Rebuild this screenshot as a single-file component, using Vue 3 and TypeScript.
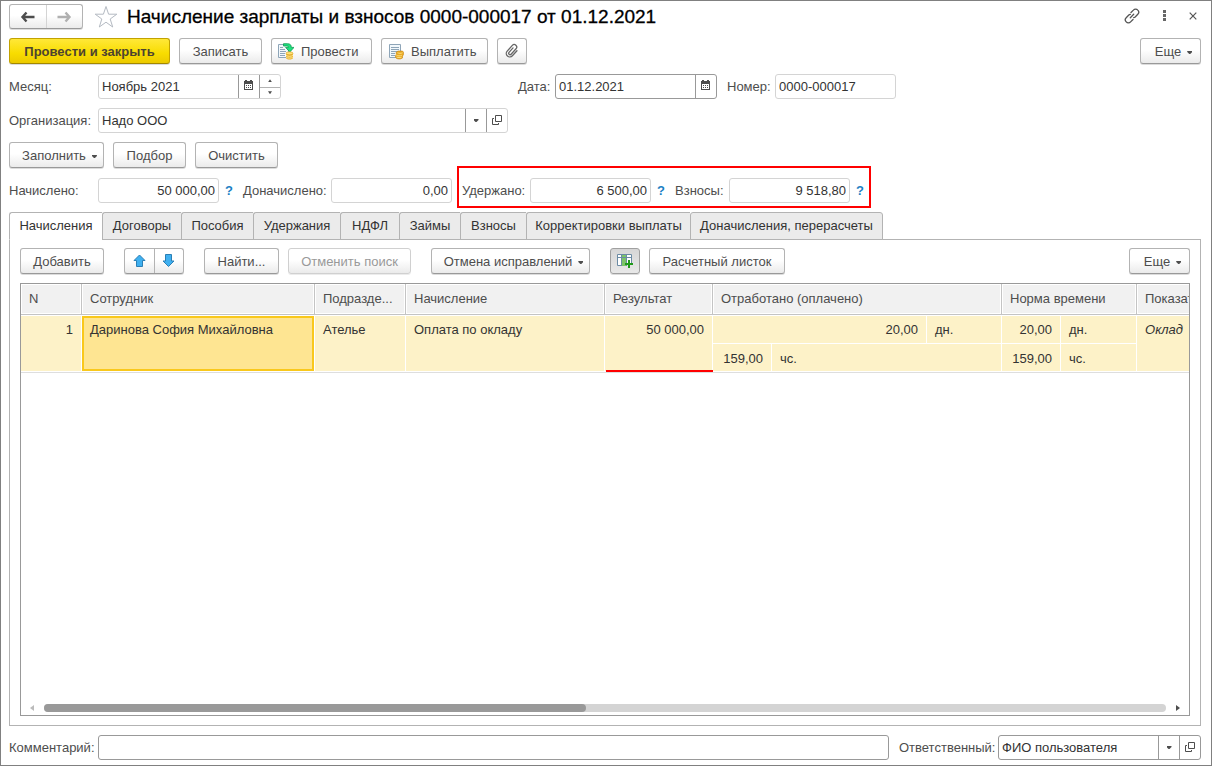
<script setup lang="ts">
import { ref } from 'vue'

const month = ref('Ноябрь 2021')
const date = ref('01.12.2021')
const docNumber = ref('0000-000017')
const organization = ref('Надо ООО')
const accrued = ref('50 000,00')
const extraAccrued = ref('0,00')
const withheld = ref('6 500,00')
const contributions = ref('9 518,80')
const comment = ref('')
const responsible = ref('ФИО пользователя')

const tabs: string[] = [
  'Начисления',
  'Договоры',
  'Пособия',
  'Удержания',
  'НДФЛ',
  'Займы',
  'Взносы',
  'Корректировки выплаты',
  'Доначисления, перерасчеты',
]
const activeTab = ref(0)
</script>

<template>
  <main class="window">
    <header class="titlebar">
      <div class="pair nav">
        <button type="button" aria-label="Назад">
          <svg width="16" height="12" viewBox="0 0 16 12"><path d="M6.500 1.500 2.500 6l4 4.500M2.500 6h12" fill="none" stroke="#4d4d4d" stroke-width="2.400" /></svg>
        </button>
        <button type="button" aria-label="Вперед">
          <svg width="16" height="12" viewBox="0 0 16 12"><path d="M9.500 1.500 13.500 6l-4 4.500M13.500 6h-12" fill="none" stroke="#b0b0b0" stroke-width="2.400" /></svg>
        </button>
      </div>
      <button type="button" class="bare star" aria-label="В избранное">
        <svg width="24" height="24" viewBox="0 0 24 24"><path d="M12 1.500 14.600 9.200H22.800L16.200 14 18.700 22 12 17.200 5.300 22 7.800 14 1.200 9.200H9.400Z" fill="#fff" stroke="#b4bac2" stroke-width="1" /></svg>
      </button>
      <h1>Начисление зарплаты и взносов 0000-000017 от 01.12.2021</h1>
      <div class="window-tools">
        <button type="button" class="bare" aria-label="Ссылка">
          <svg width="16" height="16" viewBox="0 0 16 16"><g fill="none" stroke="#555" stroke-width="1.300" stroke-linecap="round"><path d="M7 4.500 9.400 2.100a3 3 0 0 1 4.400 0 3 3 0 0 1 0 4.200L11.200 8.900a3 3 0 0 1-1.500.7" /><path d="M9 11.500 6.600 13.900a3 3 0 0 1-4.400 0 3 3 0 0 1 0-4.200L4.800 7.100a3 3 0 0 1 1.500-.7" /><path d="M6.300 9.700 9.700 6.300" /></g></svg>
        </button>
        <button type="button" class="bare" aria-label="Меню">
          <svg width="3" height="11" viewBox="0 0 3 11"><path d="M0 0h3v3H0zM0 4h3v3H0zM0 8h3v3H0z" fill="#666" /></svg>
        </button>
        <button type="button" class="bare" aria-label="Закрыть">
          <svg width="8" height="8" viewBox="0 0 8 8"><path d="M.7.7l6.600 6.600M7.300.7.7 7.300" stroke="#555" stroke-width="1.200" /></svg>
        </button>
      </div>
    </header>

    <div class="bar commands">
      <button type="button" class="btn primary">Провести и закрыть</button>
      <button type="button" class="btn">Записать</button>
      <button type="button" class="btn with-icon">
        <svg width="16" height="17" viewBox="0 0 16 17">
          <path d="M.5 1.500h10v13H.5z" fill="#f4f8fb" stroke="#8ea5b8" />
          <path d="M2 4.500h3M2 6.500h5M2 8.500h6M2 10.500h5M2 12.500h5" stroke="#8ea5b8" />
          <path d="M5.500.7h4c2.600 0 3.800 1.300 3.800 3.700H16L11.800 9 7.600 4.400h2.700c0-1-.4-1.400-1.500-1.400H5.500z" fill="#1fe07e" stroke="#0d9a50" stroke-width=".8" />
          <path d="M8 10.200v5c1.500 1.700 5.500 1.700 7 0v-5z" fill="#e8b02c" /><ellipse cx="11.500" cy="10.300" rx="3.500" ry="1.500" fill="#ffe27a" stroke="#d69a1c" stroke-width=".6" /><path d="M8 12.200c1.500 1.500 5.500 1.500 7 0M8 14c1.500 1.500 5.500 1.500 7 0" fill="none" stroke="#fff0a8" stroke-width=".8" />
        </svg>
        <span>Провести</span>
      </button>
      <button type="button" class="btn with-icon">
        <svg width="16" height="17" viewBox="0 0 16 17">
          <path d="M1.500 1.500h11v13h-11z" fill="#f2f8fc" stroke="#8ea5b8" />
          <path d="M3 4.500h8M3 6.500h8M3 8.500h7M3 10.500h4M3 12.500h4" stroke="#8ea5b8" />
          <path d="M8 9.500 10 8h4.500l1 1.200v2.500l-1 1.300v2c-2 1.500-5 1.200-6.500 0l-.7-2 1-1.500z" fill="#e9a820" stroke="#c88512" stroke-width=".6" />
          <path d="M9.500 9.800c1.500.7 3.500.7 5 0M8.300 12c1.500 1 3.800 1.200 5.500.3M8.500 14c1.500.8 3.500.9 5 .2" fill="none" stroke="#ffe68c" stroke-width=".9" />
        </svg>
        <span>Выплатить</span>
      </button>
      <button type="button" class="btn" aria-label="Файлы">
        <svg width="16" height="16" viewBox="0 0 16 16"><g transform="rotate(42 8 8)"><path d="M11.500 4.500v6.800a3.500 3.500 0 0 1-7 0V3.600a2.500 2.500 0 0 1 5 0v7.400a1.400 1.400 0 0 1-2.800 0V5" fill="none" stroke="#666" stroke-width="1.300" stroke-linecap="round" /></g></svg>
      </button>
      <button type="button" class="btn more">Еще<i class="caret"></i></button>
    </div>

    <div class="bar">
      <label class="lead" for="month">Месяц:</label>
      <div class="field month">
        <input id="month" v-model="month" type="text" />
        <button type="button" aria-label="Календарь">
          <svg width="10" height="13" viewBox="0 0 10 13"><path d="M0 1h1V0h2v1h3V0h2v1h1v9H0zM1 4v5h7V4z" fill="#4d4d4d" fill-rule="evenodd" /><path d="M2 5h1v1H2zM4 5h1v1H4zM6 5h1v1H6zM2 7h1v1H2zM4 7h1v1H4zM6 7h1v1H6z" fill="#4d4d4d" /></svg>
        </button>
        <div class="spinner">
          <button type="button" aria-label="Больше"><i class="tick up"></i></button>
          <button type="button" aria-label="Меньше"><i class="tick"></i></button>
        </div>
      </div>
      <label class="date-label" for="date">Дата:</label>
      <div class="field dark date">
        <input id="date" v-model="date" type="text" />
        <button type="button" aria-label="Календарь">
          <svg width="10" height="13" viewBox="0 0 10 13"><path d="M0 1h1V0h2v1h3V0h2v1h1v9H0zM1 4v5h7V4z" fill="#4d4d4d" fill-rule="evenodd" /><path d="M2 5h1v1H2zM4 5h1v1H4zM6 5h1v1H6zM2 7h1v1H2zM4 7h1v1H4zM6 7h1v1H6z" fill="#4d4d4d" /></svg>
        </button>
      </div>
      <label class="number-label" for="number">Номер:</label>
      <div class="field short"><input id="number" v-model="docNumber" type="text" /></div>
    </div>

    <div class="bar">
      <label class="lead" for="org">Организация:</label>
      <div class="field org">
        <input id="org" v-model="organization" type="text" />
        <button type="button" aria-label="Выбрать"><i class="caret"></i></button>
        <button type="button" aria-label="Открыть">
          <svg width="10" height="11" viewBox="0 0 10 11"><path d="M3.500.5h6v6h-6zM2 3.500H.5v6h6V8" fill="none" stroke="#4d4d4d" /></svg>
        </button>
      </div>
    </div>

    <div class="bar fill">
      <button type="button" class="btn">Заполнить<i class="caret"></i></button>
      <button type="button" class="btn">Подбор</button>
      <button type="button" class="btn">Очистить</button>
    </div>

    <div class="bar sums">
      <label class="lead" for="accrued">Начислено:</label>
      <div class="field short"><input id="accrued" v-model="accrued" type="text" class="num" /></div>
      <button type="button" class="help">?</button>
      <label class="extra-label" for="extra">Доначислено:</label>
      <div class="field short"><input id="extra" v-model="extraAccrued" type="text" class="num" /></div>
      <div class="marked">
        <label class="held-label" for="held">Удержано:</label>
        <div class="field short"><input id="held" v-model="withheld" type="text" class="num" /></div>
        <button type="button" class="help">?</button>
        <label class="contrib-label" for="contrib">Взносы:</label>
        <div class="field short"><input id="contrib" v-model="contributions" type="text" class="num" /></div>
        <button type="button" class="help last">?</button>
      </div>
    </div>

    <nav class="tabs" role="tablist">
      <button
        v-for="(tab, i) in tabs"
        :key="tab"
        type="button"
        role="tab"
        :aria-selected="i === activeTab"
        :class="{ active: i === activeTab }"
        @click="activeTab = i"
      >{{ tab }}</button>
    </nav>

    <section class="panel">
      <div class="bar tools">
        <button type="button" class="btn">Добавить</button>
        <div class="pair">
          <button type="button" aria-label="Вверх">
            <svg width="13" height="14" viewBox="0 0 13 14"><path d="M6.500 1 12 6.500H9.500v6h-6v-6H1z" fill="#3fb0f0" stroke="#2b7fb5" /></svg>
          </button>
          <button type="button" aria-label="Вниз">
            <svg width="14" height="14" viewBox="0 0 14 14"><path d="M6.500 12.500 12 7H9.500V.5h-6V7H1z" fill="#3fb0f0" stroke="#2b7fb5" /></svg>
          </button>
        </div>
        <button type="button" class="btn">Найти...</button>
        <button type="button" class="btn" disabled>Отменить поиск</button>
        <button type="button" class="btn">Отмена исправлений<i class="caret"></i></button>
        <button type="button" class="btn pressed" aria-label="Показать колонки">
          <svg width="16" height="16" viewBox="0 0 16 16">
            <path d="M.5 1.500h14v11H.5z" fill="#fff" stroke="#6b8ba4" />
            <path d="M5 2h4v11H5z" fill="#7cc468" />
            <path d="M.5 4.500h14M4.500 1.500v11M9.500 1.500v11" stroke="#6b8ba4" />
            <path d="M10 10h6v6h-6z" fill="#e3e3e3" />
            <path d="M12 7v8M8 11h8" stroke="#1f9a1a" stroke-width="2" />
          </svg>
        </button>
        <button type="button" class="btn">Расчетный листок</button>
        <button type="button" class="btn more">Еще<i class="caret"></i></button>
      </div>

      <div class="grid">
        <div class="viewport">
          <table>
            <colgroup>
              <col class="c-n" /><col class="c-emp" /><col class="c-dep" /><col class="c-acc" /><col class="c-res" />
              <col class="c-qty" /><col class="c-mid" /><col class="c-unit" /><col class="c-qty" /><col class="c-norm" /><col class="c-ind" />
            </colgroup>
            <thead>
              <tr>
                <th>N</th>
                <th>Сотрудник</th>
                <th>Подразде...</th>
                <th>Начисление</th>
                <th>Результат</th>
                <th colspan="3">Отработано (оплачено)</th>
                <th colspan="2">Норма времени</th>
                <th>Показатели</th>
              </tr>
            </thead>
            <tbody>
              <tr>
                <td rowspan="2" class="num tall">1</td>
                <td rowspan="2" class="current tall">Даринова София Михайловна</td>
                <td rowspan="2" class="tall">Ателье</td>
                <td rowspan="2" class="tall">Оплата по окладу</td>
                <td rowspan="2" class="num underlined tall">50 000,00</td>
                <td colspan="2" class="num">20,00</td>
                <td>дн.</td>
                <td class="num">20,00</td>
                <td>дн.</td>
                <td rowspan="2" class="indicator tall">Оклад</td>
              </tr>
              <tr class="second">
                <td class="num">159,00</td>
                <td colspan="2">чс.</td>
                <td class="num">159,00</td>
                <td>чс.</td>
              </tr>
            </tbody>
          </table>
        </div>
        <div class="scroll">
          <i class="arrow left"></i>
          <div class="track"><div class="thumb"></div></div>
          <i class="arrow right"></i>
        </div>
      </div>
    </section>

    <footer class="bar">
      <label class="lead" for="comment">Комментарий:</label>
      <div class="field dark comment"><input id="comment" v-model="comment" type="text" /></div>
      <label class="resp-label" for="resp">Ответственный:</label>
      <div class="field dark resp">
        <input id="resp" v-model="responsible" type="text" />
        <button type="button" aria-label="Выбрать"><i class="caret"></i></button>
        <button type="button" aria-label="Открыть">
          <svg width="10" height="11" viewBox="0 0 10 11"><path d="M3.500.5h6v6h-6zM2 3.500H.5v6h6V8" fill="none" stroke="#4d4d4d" /></svg>
        </button>
      </div>
    </footer>
  </main>
</template>

<style>
body {
  margin: 0;
  background: #fff;
}
</style>

<style scoped>
* {
  box-sizing: border-box;
}
.window {
  display: flex;
  flex-direction: column;
  min-height: 100vh;
  padding: 3px 10px 5px 8px;
  border: 1px solid #808080;
  font: 13px/16px "Liberation Sans", Arial, sans-serif;
  color: #4d4d4d;
}
button,
input {
  font: inherit;
  color: inherit;
  margin: 0;
  padding: 0;
  border: 0;
  background: none;
}
button {
  display: flex;
  align-items: center;
  justify-content: center;
  white-space: nowrap;
}
svg {
  display: block;
  flex: none;
}
.titlebar {
  display: flex;
  align-items: center;
  height: 25px;
  margin-bottom: 9px;
}
h1 {
  flex: 1;
  margin: 0;
  font-size: 19px;
  line-height: 24px;
  font-weight: 400;
  color: #000;
  -webkit-text-stroke: 0.3px #000;
  white-space: nowrap;
}
.star {
  width: 44px;
  padding-left: 2px;
}
.window-tools {
  display: flex;
  align-items: center;
  gap: 23px;
  padding: 0 4px 2px 0;
}
.pair {
  display: flex;
  height: 26px;
  border: 1px solid #b3b3b3;
  border-bottom-color: #999;
  border-radius: 3px;
  background: linear-gradient(#fff 45%, #ebebeb);
  box-shadow: 0 1px 0 #dcdcdc;
}
.pair button {
  flex: 1;
}
.pair button + button {
  border-left: 1px solid #b3b3b3;
}
.nav {
  width: 74px;
  height: 25px;
}
.nav button + button {
  border-left-color: #d4d4d4;
}
.bar {
  display: flex;
  align-items: center;
  margin-bottom: 9px;
}
.btn {
  height: 26px;
  padding-top: 2px;
  border: 1px solid #b3b3b3;
  border-bottom-color: #999;
  border-radius: 3px;
  background: linear-gradient(#fff 45%, #ebebeb);
  box-shadow: 0 1px 0 #dcdcdc;
}
.btn svg {
  margin-top: -2px;
}
.btn .caret {
  margin: 1px -6px 0 6px;
}
.btn:disabled {
  color: #999;
  border-color: #d0d0d0;
  box-shadow: 0 1px 0 #ececec;
}
.primary {
  border-color: #c2a200;
  border-bottom-color: #a38800;
  background: linear-gradient(#ffe838, #f8dc00 60%, #ecca00);
  font-weight: 700;
  color: #4d4330;
}
.pressed {
  border-color: #a0a0a0;
  background: linear-gradient(#d6d6d6, #e8e8e8);
}
.with-icon {
  justify-content: flex-start;
  gap: 7px;
  padding-left: 6px;
}
.caret {
  width: 5px;
  height: 3px;
  background: #4d4d4d;
  clip-path: polygon(0 0, 100% 0, 100% 34%, 60% 100%, 40% 100%, 0 34%);
}
.tick {
  width: 4px;
  height: 3px;
  background: #4d4d4d;
  clip-path: polygon(0 0, 100% 0, 50% 100%);
}
.tick.up {
  clip-path: polygon(0 100%, 100% 100%, 50% 0);
}
.commands {
  gap: 9px;
  margin-bottom: 10px;
}
.commands .btn:nth-child(1) { width: 161px; }
.commands .btn:nth-child(2) { width: 83px; }
.commands .btn:nth-child(3) { width: 101px; }
.commands .btn:nth-child(4) { width: 107px; }
.commands .btn:nth-child(5) { width: 30px; }
.bar .more {
  width: 61px;
  margin-left: auto;
}
.lead {
  flex: none;
  width: 89px;
}
.field {
  display: flex;
  flex: none;
  height: 25px;
  border: 1px solid #d4d4d4;
  border-radius: 3px;
  background: #fff;
  color: #333;
}
.field.dark {
  border-color: #999;
}
.field input {
  flex: 1;
  min-width: 0;
  padding: 0 3px;
  outline: none;
}
.field > button {
  width: 21px;
  border-left: 1px solid #999;
}
.num {
  text-align: right;
}
.spinner {
  display: grid;
  grid-template-rows: 1fr 1fr;
  width: 21px;
  border-left: 1px solid #999;
}
.spinner button + button {
  border-top: 1px solid #b3b3b3;
}
.month {
  width: 183px;
}
.date-label {
  margin-left: 237px;
  width: 37px;
}
.date {
  width: 162px;
}
.number-label {
  margin-left: 10px;
  width: 48px;
}
.short {
  width: 121px;
}
.org {
  width: 410px;
}
.fill {
  gap: 9px;
  margin-bottom: 10px;
}
.fill .btn:nth-child(1) { width: 95px; }
.fill .btn:nth-child(2) { width: 73px; }
.fill .btn:nth-child(3) { width: 83px; }
.help {
  width: 24px;
  padding-right: 4px;
  font-weight: 700;
  color: #1c7fc4;
}
.help.last {
  width: 20px;
  padding: 0;
}
.extra-label {
  width: 88px;
}
.marked {
  position: relative;
  display: flex;
  align-items: center;
  margin-left: 10px;
}
.marked::after {
  content: "";
  position: absolute;
  inset: -12px -1px -5px -5px;
  border: 2px solid #f00;
  pointer-events: none;
}
.held-label {
  width: 68px;
}
.contrib-label {
  width: 54px;
}
.tabs {
  display: grid;
  grid-template-columns: 93px 79px 72px 87px 59px 61px 66px 164px 193px;
  height: 28px;
  margin-bottom: -1px;
  z-index: 1;
}
.tabs button {
  border: 1px solid #b3b3b3;
  border-right-width: 0;
  border-radius: 3px 0 0 0;
  background: #ebebeb;
  color: #333;
}
.tabs button:last-child {
  border-right-width: 1px;
  border-radius: 3px 3px 0 0;
}
.tabs .active {
  background: #fff;
  border-bottom-color: #fff;
}
.panel {
  flex: 1;
  display: flex;
  flex-direction: column;
  border: 1px solid #b3b3b3;
  padding: 8px 10px 9px;
  margin-bottom: 9px;
}
.tools .btn:nth-child(1) { width: 84px; }
.tools .pair { width: 60px; margin: 0 20px; }
.tools .btn:nth-child(3) { width: 75px; }
.tools .btn:nth-child(4) { width: 123px; margin: 0 20px 0 9px; }
.tools .btn:nth-child(5) { width: 159px; }
.tools .btn:nth-child(6) { width: 30px; margin: 0 9px 0 20px; }
.tools .btn:nth-child(7) { width: 136px; }
.grid {
  flex: 1;
  display: flex;
  flex-direction: column;
  border: 1px solid #999;
  min-width: 0;
}
.viewport {
  flex: 1;
  overflow: hidden;
}
table {
  table-layout: fixed;
  width: 1236px;
  border-collapse: separate;
  border-spacing: 0;
  border-bottom: 1px solid #dedede;
}
.c-n { width: 61px; }
.c-emp { width: 233px; }
.c-dep { width: 91px; }
.c-acc { width: 199px; }
.c-res { width: 108px; }
.c-qty { width: 59px; }
.c-mid { width: 155px; }
.c-unit { width: 75px; }
.c-norm { width: 76px; }
.c-ind { width: 120px; }
th {
  height: 31px;
  padding: 0 8px;
  border-right: 1px solid #c4c4c4;
  border-bottom: 1px solid #c4c4c4;
  background: #f1f1f1;
  box-shadow: inset 0 0 0 1px #fff;
  font-weight: 400;
  text-align: left;
  white-space: nowrap;
}
td {
  height: 28px;
  padding: 0 8px;
  border-top: 1px solid #fff;
  border-right: 1px solid #fff;
  background: #fdf2c8;
  color: #333;
  white-space: nowrap;
}
td.tall {
  vertical-align: top;
  padding-top: 6px;
  border-bottom: 1px solid #fff;
}
.second td {
  height: 29px;
  padding-top: 2px;
  border-bottom: 1px solid #fff;
}
td.current {
  background: #fee592;
  box-shadow: inset 0 0 0 2px #f9c81c;
}
td.underlined {
  position: relative;
}
.underlined::after {
  content: "";
  position: absolute;
  left: 1px;
  right: -1px;
  bottom: -1px;
  height: 2px;
  background: #f00;
}
.indicator {
  font-style: italic;
}
.scroll {
  display: flex;
  align-items: center;
  height: 8px;
  margin-bottom: 3px;
  padding: 0 9px;
}
.track {
  flex: 1;
  height: 8px;
  margin: 0 10px;
  border-radius: 4px;
  background: #d4d4d4;
}
.thumb {
  width: 48.3%;
  height: 8px;
  border-radius: 4px;
  background: #999;
}
.arrow {
  width: 4px;
  height: 6px;
  background: #4d4d4d;
  clip-path: polygon(0 0, 100% 50%, 0 100%);
}
.arrow.left {
  background: #bbb;
  clip-path: polygon(100% 0, 0 50%, 100% 100%);
}
footer.bar {
  margin-bottom: 0;
}
.comment {
  flex: 1;
}
.resp-label {
  width: 109px;
  padding-left: 10px;
  flex: none;
}
.resp {
  width: 203px;
}
</style>
